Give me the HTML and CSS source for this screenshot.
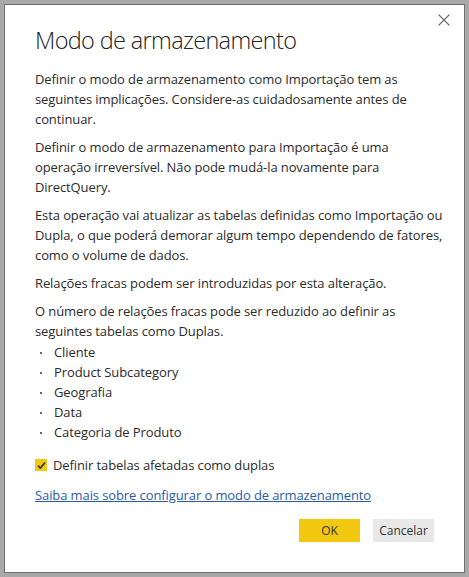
FILE: index.html
```html
<!DOCTYPE html>
<html lang="pt">
<head>
<meta charset="utf-8">
<link rel="stylesheet" href="styles.css">
</head>
<body>
<div class="dialog">
  <button class="close" aria-label="Fechar">
    <svg width="12" height="12" viewBox="0 0 12 12"><path d="M0.5 0.5L11.5 11.5M11.5 0.5L0.5 11.5" stroke="#6e6e6e" stroke-width="1.1" fill="none"/></svg>
  </button>
  <h1 class="title">Modo de armazenamento</h1>
  <div class="content">
    <p>Definir o modo de armazenamento como Importação tem as<br>seguintes implicações. Considere-as cuidadosamente antes de<br>continuar.</p>
    <p>Definir o modo de armazenamento para Importação é uma<br>operação irreversível. Não pode mudá-la novamente para<br>DirectQuery.</p>
    <p>Esta operação vai atualizar as tabelas definidas como Importação ou<br>Dupla, o que poderá demorar algum tempo dependendo de fatores,<br>como o volume de dados.</p>
    <p>Relações fracas podem ser introduzidas por esta alteração.</p>
    <p class="lead">O número de relações fracas pode ser reduzido ao definir as<br>seguintes tabelas como Duplas.</p>
    <ul class="tables">
      <li>Cliente</li>
      <li>Product Subcategory</li>
      <li>Geografia</li>
      <li>Data</li>
      <li>Categoria de Produto</li>
    </ul>
    <label class="check">
      <span class="box"><svg width="11" height="11" viewBox="0 0 11 11"><path d="M2 5.6L4.3 8L9 2.6" stroke="#333" stroke-width="1.6" fill="none"/></svg></span>
      <span>Definir tabelas afetadas como duplas</span>
    </label>
    <a class="link" href="#">Saiba mais sobre configurar o modo de armazenamento</a>
  </div>
  <div class="actions">
    <button class="btn primary">OK</button>
    <button class="btn">Cancelar</button>
  </div>
</div>
</body>
</html>
```

FILE: styles.css
```css
html, body {
  margin: 0;
  padding: 0;
  height: 100%;
}
body {
  background: #a9a9a9;
  padding: 4px;
  box-sizing: border-box;
  font-family: "Open Sans", "Noto Sans", sans-serif;
  color: #2b2b2b;
}
.dialog {
  position: relative;
  box-sizing: border-box;
  height: 100%;
  background: #fff;
  border: 1px solid #6f6f6f;
  padding: 0 30px;
}
.close {
  position: absolute;
  top: 7px;
  right: 12px;
  width: 16px;
  height: 16px;
  padding: 0;
  border: 0;
  background: none;
  display: flex;
  align-items: center;
  justify-content: center;
}
.title {
  margin: 0;
  padding-top: 18px;
  font-size: 23.5px;
  font-weight: 300;
  line-height: 34px;
  color: #222;
  letter-spacing: -0.65px;
}
.content {
  padding-top: 12px;
  font-size: 13px;
  line-height: 20px;
  letter-spacing: -0.1px;
}
.content p {
  margin: 0 0 8px 0;
  white-space: nowrap;
}
.content p.lead {
  margin-bottom: 1px;
}
.tables {
  list-style: none;
  margin: 0;
  padding: 0;
  line-height: 20px;
}
.tables li {
  position: relative;
  padding-left: 19px;
}
.tables li::before {
  content: "";
  position: absolute;
  left: 5px;
  top: 10px;
  width: 2px;
  height: 2px;
  background: #666;
}
.check {
  display: flex;
  align-items: center;
  gap: 6px;
  margin-top: 13px;
}
.box {
  width: 12px;
  height: 12px;
  background: #f2c811;
  display: flex;
  align-items: center;
  justify-content: center;
}
.link {
  display: inline-block;
  margin-top: 10px;
  color: #2a5aa8;
  text-decoration: underline;
}
.actions {
  display: flex;
  justify-content: flex-end;
  gap: 13px;
  padding-top: 14px;
  padding-right: 0;
}
.btn {
  width: 61px;
  height: 23px;
  border: 0;
  padding: 0;
  background: #e8e8e8;
  font-family: "Open Sans", "Noto Sans", sans-serif;
  font-size: 12px;
  color: #333;
}
.btn.primary {
  background: #f2c811;
}
```
